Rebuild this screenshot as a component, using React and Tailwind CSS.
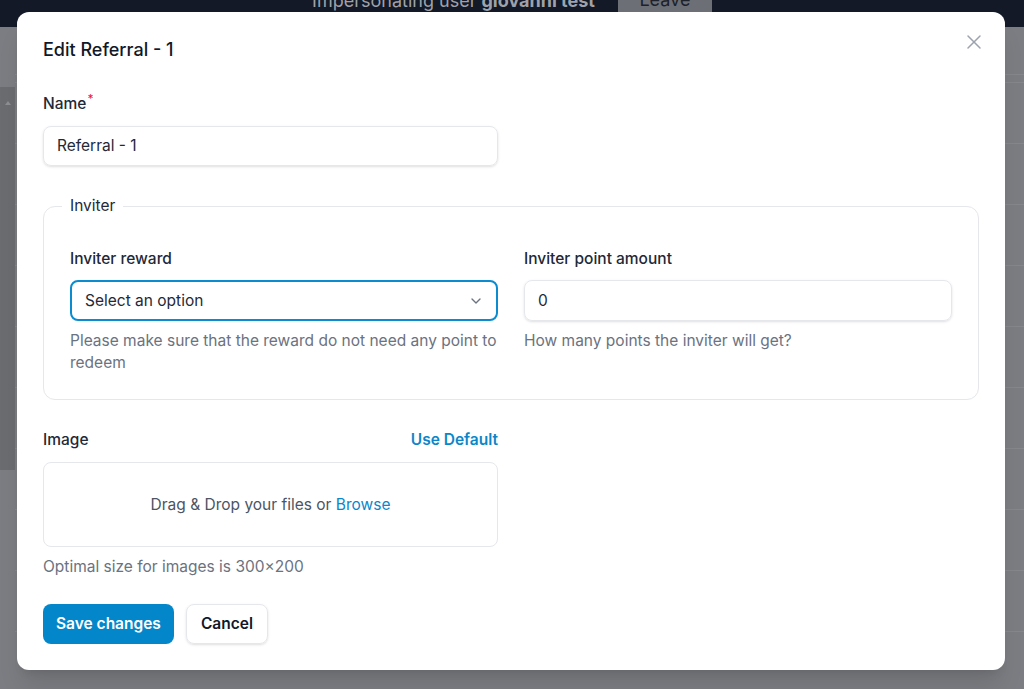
import { X, ChevronDown } from 'lucide-react';

const rows = [0, 1, 2, 3, 4, 5, 6, 7, 8, 9];

const App = () => {
  return (
    <div className="relative w-[1024px] h-[689px] overflow-hidden bg-[#7c7d82] font-['Inter',sans-serif]">
      {/* Impersonation bar */}
      <div className="h-[27px] bg-[#131926] overflow-hidden flex justify-center">
        <div className="flex items-start -mt-[13px]">
          <span className="text-[18px] leading-[24px] text-[#9fa2a9] mt-[2px]">
            Impersonating user <span className="font-bold">giovanni test</span>
          </span>
          <span className="ml-[23px] w-[94px] h-[25px] bg-[#6c6f76] text-[#1c212c] text-[18px] leading-[26px] text-center">
            Leave
          </span>
        </div>
      </div>

      {/* Background page (dimmed) */}
      <div className="flex">
        <div className="w-[15px] flex flex-col">
          <div className="h-[60px]" />
          <div className="h-[383px] bg-[#6b6c70] flex justify-center pt-[14px]">
            <div className="w-0 h-0 border-l-[3px] border-r-[3px] border-b-[4px] border-l-transparent border-r-transparent border-b-[#8d8e92]" />
          </div>
        </div>
        <div className="flex-1 flex flex-col">
          <div className="h-[48px] border-b border-[#86878b]" />
          <div className="h-[8px] border-b border-[#86878b]" />
          {rows.map((r) => (
            <div key={r} className="h-[61px] border-b border-[#86878b]" />
          ))}
        </div>
      </div>

      {/* Modal */}
      <div className="absolute left-[17px] top-[12px] w-[988px] h-[658px] bg-white rounded-xl shadow-xl px-[26px] pt-[26px]">
        <button className="absolute right-[19px] top-[18px] text-[#9ca3af]">
          <X className="w-[24px] h-[24px]" strokeWidth={1.5} />
        </button>

        <h2 className="text-[18px] leading-[24px] font-medium text-[#111827]">Edit Referral - 1</h2>

        <div className="mt-[31px] w-[455px]">
          <label className="block text-[15.5px] leading-[22px] font-[450] text-[#1f2937]">
            Name<sup className="text-[#e11d48] font-medium ml-[1px]">*</sup>
          </label>
          <div className="mt-[11px] h-[40px] rounded-lg border border-[#e5e7eb] shadow-sm flex items-center px-[13px] text-[15.5px] text-[#1f2937]">
            Referral - 1
          </div>
        </div>

        <fieldset className="mt-[29px] border border-[#e5e7eb] rounded-xl px-[26px] pb-[25px]">
          <legend className="-ml-2 px-2 text-[15.5px] leading-[22px] text-[#1f2937]">Inviter</legend>
          <div className="mt-[31px] grid grid-cols-2 gap-[26px]">
            <div>
              <label className="block text-[15.5px] leading-[22px] font-[450] text-[#1f2937]">Inviter reward</label>
              <div className="mt-[10px] h-[41px] rounded-lg border-2 border-[#0b8bd0] flex items-center justify-between pl-[13px] pr-[12px] text-[15.5px] text-[#1f2937]">
                <span>Select an option</span>
                <ChevronDown className="w-[16px] h-[16px] text-[#6b7280]" strokeWidth={2} />
              </div>
              <p className="mt-[9px] text-[15.5px] leading-[22px] text-[#6b7280]">
                Please make sure that the reward do not need any point to redeem
              </p>
            </div>
            <div>
              <label className="block text-[15.5px] leading-[22px] font-[450] text-[#1f2937]">Inviter point amount</label>
              <div className="mt-[10px] h-[41px] rounded-lg border border-[#e5e7eb] shadow-sm flex items-center px-[13px] text-[15.5px] text-[#1f2937]">
                0
              </div>
              <p className="mt-[9px] text-[15.5px] leading-[22px] text-[#6b7280]">
                How many points the inviter will get?
              </p>
            </div>
          </div>
        </fieldset>

        <div className="mt-[29px] w-[455px]">
          <div className="flex items-center justify-between text-[15.5px] leading-[22px]">
            <span className="font-[450] text-[#1f2937]">Image</span>
            <span className="font-semibold text-[#0b86c9]">Use Default</span>
          </div>
          <div className="mt-[11px] h-[85px] rounded-lg border border-[#e5e7eb] flex items-center justify-center text-[15.5px] text-[#4b5563]">
            Drag &amp; Drop your files or&nbsp;<span className="text-[#0b86c9]">Browse</span>
          </div>
          <p className="mt-[9px] text-[15.5px] leading-[22px] text-[#6b7280]">Optimal size for images is 300×200</p>
        </div>

        <div className="mt-[26px] flex gap-[12px]">
          <button className="h-[40px] px-[13px] rounded-lg bg-[#0487ca] text-white text-[15.5px] font-semibold">
            Save changes
          </button>
          <button className="h-[40px] px-[14px] rounded-lg border border-[#e5e7eb] shadow-sm text-[#111827] text-[15.5px] font-semibold">
            Cancel
          </button>
        </div>
      </div>
    </div>
  );
};

export default App;
